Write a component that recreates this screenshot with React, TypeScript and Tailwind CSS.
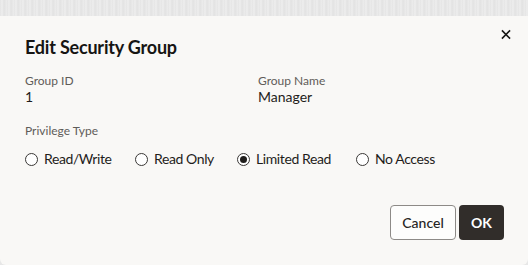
const options = [
    { label: "Read/Write", w: "w-[110px]" },
    { label: "Read Only", w: "w-[102px]" },
    { label: "Limited Read", w: "w-[119px]" },
    { label: "No Access", w: "w-[90px]" },
];

function Radio({ label, width, checked }: { label: string; width: string; checked?: boolean }) {
    return (
        <label className={`flex items-center gap-[6px] ${width}`}>
            <span className="flex h-[13px] w-[13px] shrink-0 items-center justify-center rounded-full border-[1.3px] border-[#3a3836] bg-white">
                {checked && <span className="h-[7px] w-[7px] rounded-full bg-[#1f1d1b]" />}
            </span>
            <span className="whitespace-nowrap text-[14px] leading-5 tracking-[-0.4px] text-[#1f1d1b]">{label}</span>
        </label>
    );
}

export default function App() {
    return (
        <div className="h-[265px] w-[528px] overflow-hidden bg-[#e7e7e7] font-['Lato',sans-serif]">
            <div className="h-[16px] bg-[repeating-linear-gradient(90deg,#e4e4e4_0px,#eeeeee_2px,#e2e2e2_4px,#ececec_7px)]" />
            <div className="h-[249px] rounded-b-[6px] bg-[#f9f8f6] pl-[25px] pr-[24px]">
                <div className="flex items-start justify-between pt-[19px]">
                    <h1 className="text-[18px] font-bold leading-6 tracking-[-0.2px] text-[#161513]">Edit Security Group</h1>
                    <button className="mr-[-7px] mt-[-6px] flex h-[10px] w-[10px] items-center justify-center text-[#161513]">
                        <svg width="11" height="11" viewBox="0 0 11 11" fill="none">
                            <path d="M1 1L10 10M10 1L1 10" stroke="currentColor" strokeWidth="1.7" />
                        </svg>
                    </button>
                </div>

                <div className="mt-[14px] grid grid-cols-[233px_1fr]">
                    <div>
                        <div className="text-[12px] leading-4 text-[#5f5c59]">Group ID</div>
                        <div className="text-[14px] leading-4 text-[#1f1d1b]">1</div>
                    </div>
                    <div>
                        <div className="text-[12px] leading-4 text-[#5f5c59]">Group Name</div>
                        <div className="text-[14px] leading-4 text-[#1f1d1b]">Manager</div>
                    </div>
                </div>

                <div className="mt-[18px] text-[12px] leading-4 text-[#5f5c59]">Privilege Type</div>
                <div className="mt-[10px] flex items-center">
                    {options.map((o) => (
                        <Radio key={o.label} label={o.label} width={o.w} checked={o.label === "Limited Read"} />
                    ))}
                </div>

                <div className="mt-[36px] flex justify-end gap-[3px]">
                    <button className="h-[35px] w-[66px] rounded-[4px] border border-[#8d8a87] bg-[#fdfdfc] text-[14px] font-medium text-[#262422]">
                        Cancel
                    </button>
                    <button className="h-[35px] w-[45px] rounded-[4px] bg-[#312d2a] text-[14px] font-bold text-white">
                        OK
                    </button>
                </div>
            </div>
        </div>
    );
}
